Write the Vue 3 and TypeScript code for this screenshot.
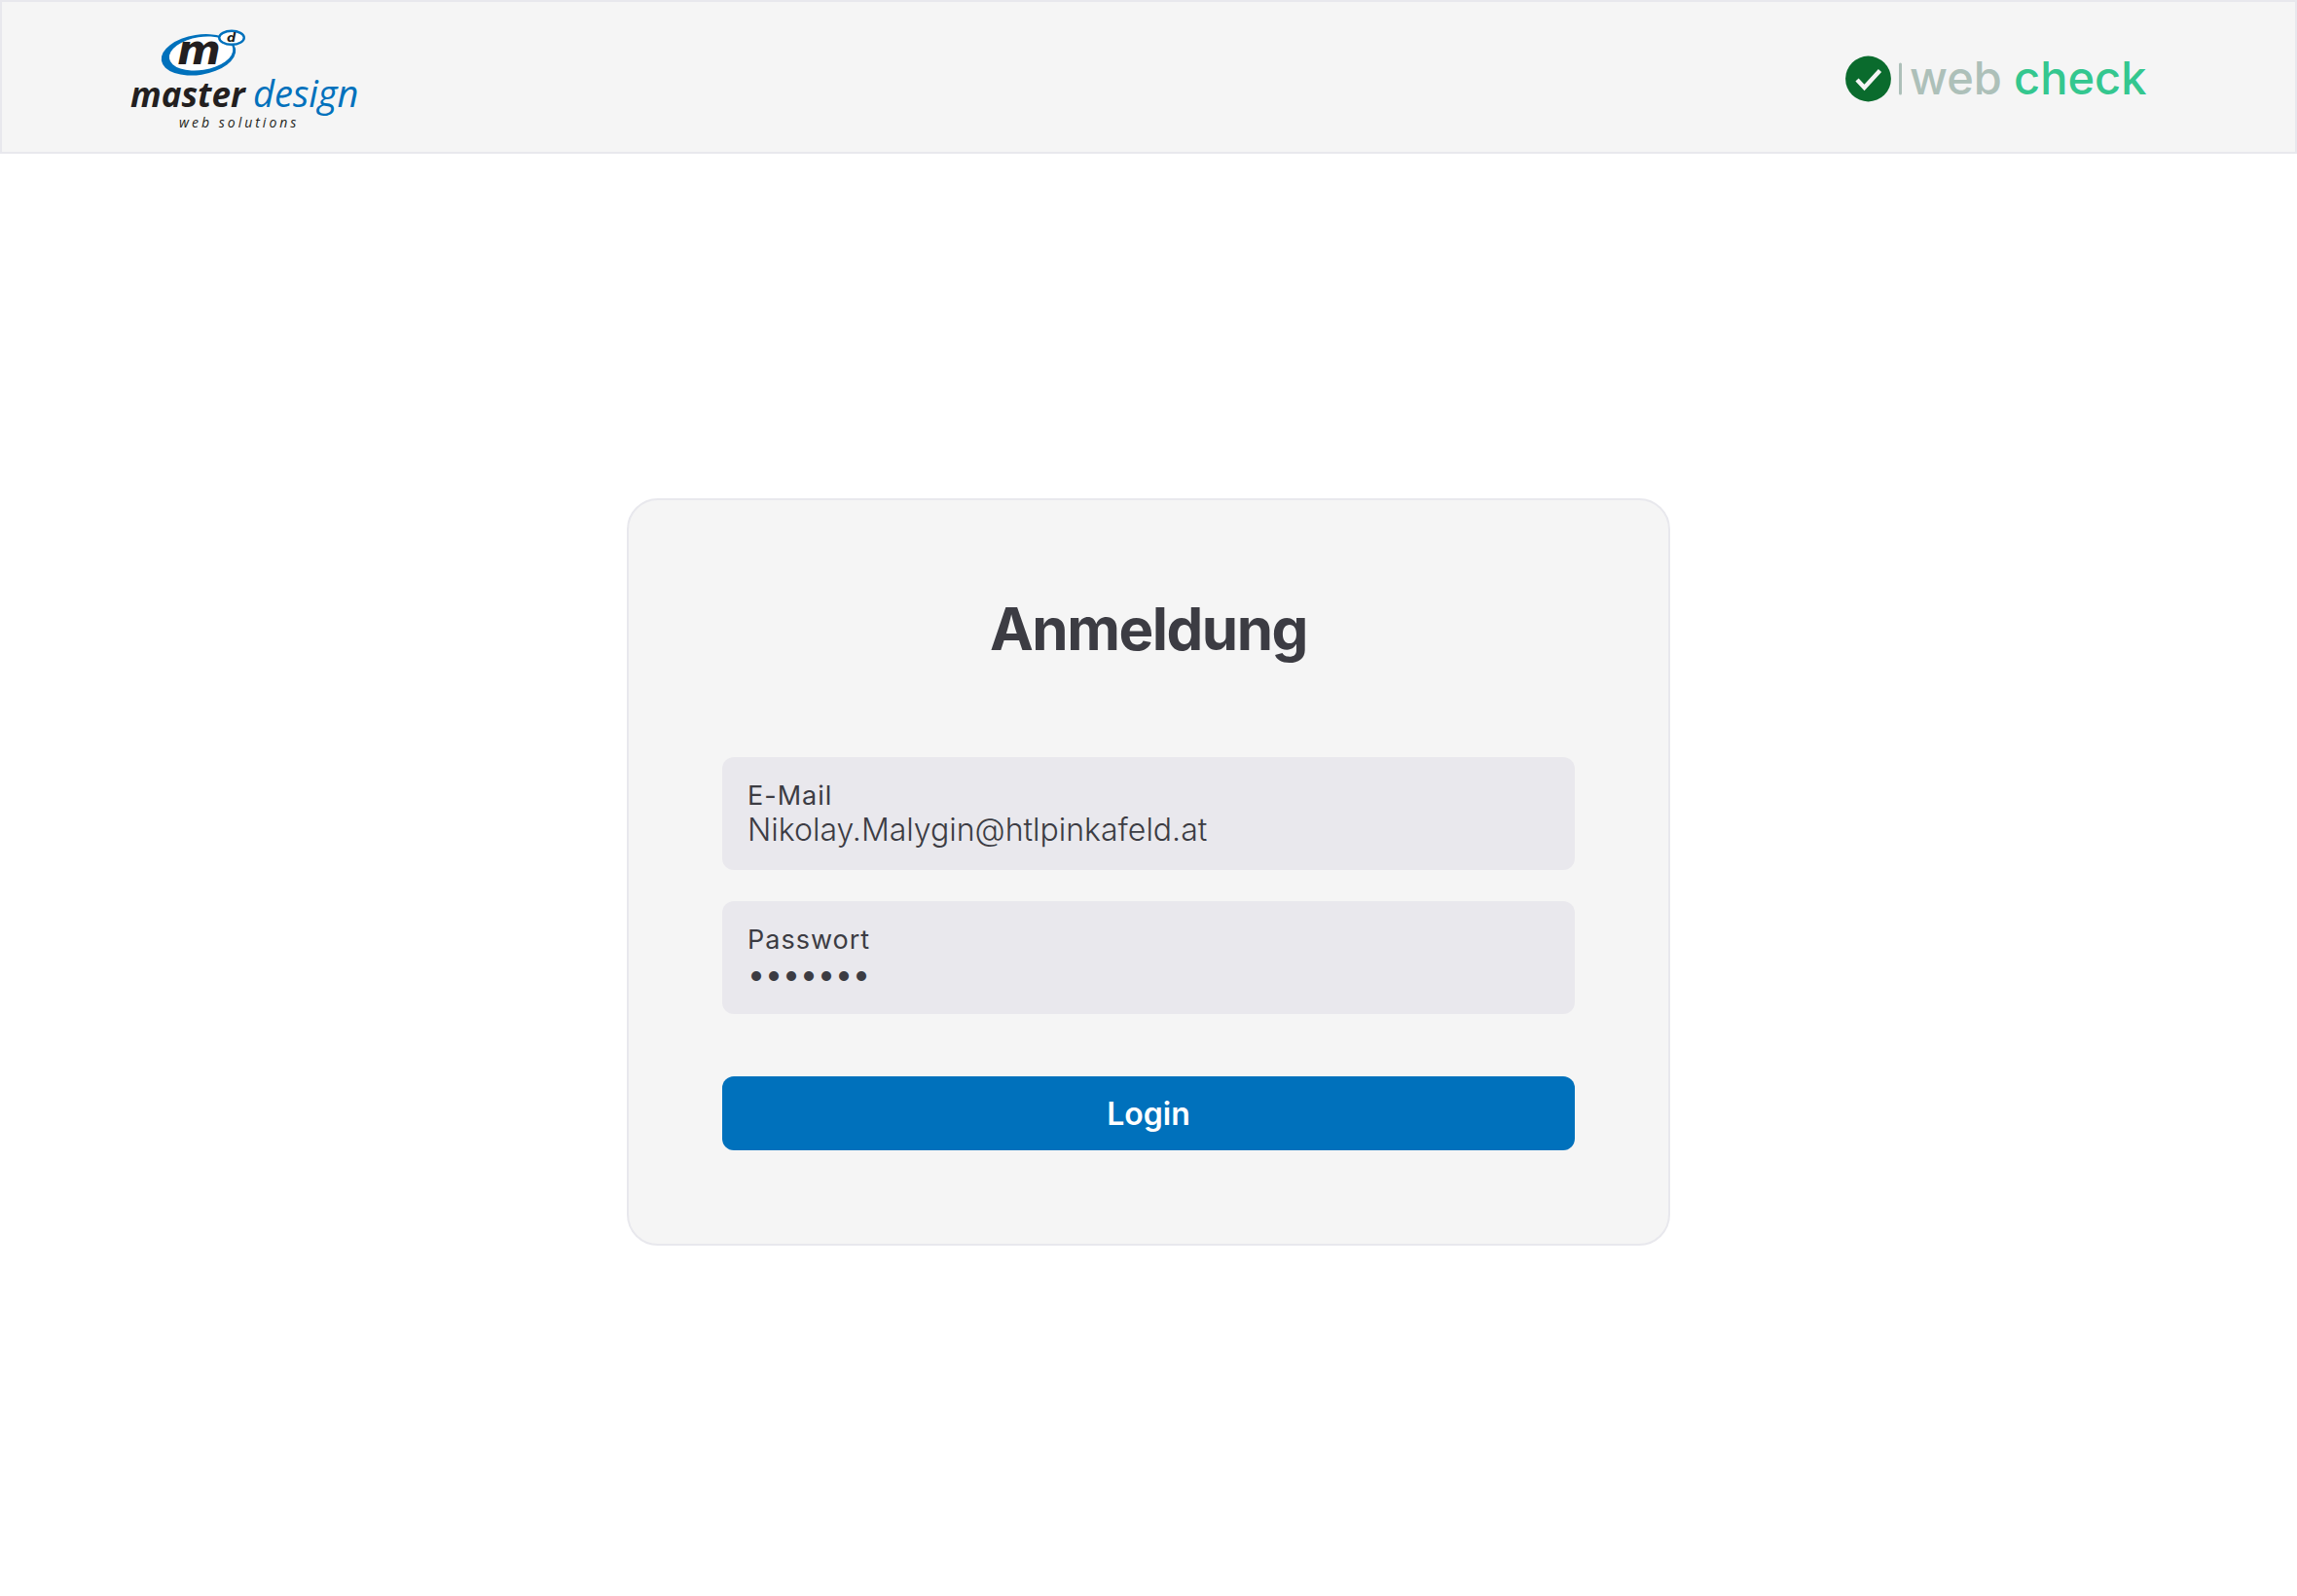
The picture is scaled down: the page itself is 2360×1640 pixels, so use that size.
<script setup lang="ts">
import { ref } from 'vue'

const email = ref<string>('Nikolay.Malygin@htlpinkafeld.at')
const password = ref<string>('passwor')
</script>

<template>
  <div class="page">
    <header class="header">
      <a class="brand" href="#" aria-label="master design web solutions">
        <svg width="244" height="110" viewBox="0 0 244 110">
          <ellipse cx="74" cy="32.3" rx="38.6" ry="20.6" transform="rotate(-9 74 32.3)" fill="#0071bc" />
          <ellipse cx="76.6" cy="31" rx="33" ry="17" transform="rotate(-9 76.6 31)" fill="#fff" />
          <ellipse cx="108" cy="14.8" rx="12.8" ry="7" fill="#fff" stroke="#0071bc" stroke-width="2.4" />
          <text class="mark" x="52" y="42">m</text>
          <text class="mark-small" x="103" y="19">d</text>
          <text class="name-bold" x="4" y="86">master</text>
          <text class="name" x="130" y="86">design</text>
          <text class="tagline" x="54" y="107">web solutions</text>
        </svg>
      </a>
      <a class="brand" href="#" aria-label="web check">
        <svg width="312" height="70" viewBox="0 -10 312 70">
          <circle cx="25.5" cy="27" r="23.4" fill="#0a6b2d" />
          <path d="M14 28 L21.5 36 L37.5 18.5" fill="none" stroke="#f5f5f5" stroke-width="4.4" />
          <rect x="57" y="10.5" width="3" height="33" rx="1.5" fill="#adc0b9" />
          <text class="word word-muted" x="68" y="43">web</text>
          <text class="word word-accent" x="175" y="43">check</text>
        </svg>
      </a>
    </header>

    <main class="main">
      <form class="card" @submit.prevent>
        <h1 class="title">Anmeldung</h1>
        <div class="fields">
          <div class="field">
            <label class="label" for="email">E-Mail</label>
            <input id="email" v-model="email" class="input" type="email" spellcheck="false" />
          </div>
          <div class="field">
            <label class="label" for="password">Passwort</label>
            <input id="password" v-model="password" class="input input-secret" type="password" />
          </div>
        </div>
        <button class="submit" type="submit">Login</button>
      </form>
    </main>
  </div>
</template>

<style>
body {
  margin: 0;
  background: #fff;
}
</style>

<style scoped>
.page {
  display: flex;
  flex-direction: column;
  min-height: 100vh;
  font-family: Inter, "Liberation Sans", sans-serif;
  color: #3c3c43;
}
.header {
  display: flex;
  align-items: center;
  justify-content: space-between;
  padding: 22px 152px 22px 128px;
  border: 2px solid #e8e8ed;
  background: #f5f5f5;
}
.brand,
.brand svg {
  display: block;
}
.mark,
.mark-small {
  font-family: "DejaVu Sans", sans-serif;
  font-style: italic;
  font-weight: 700;
  fill: #231f20;
}
.mark {
  font-size: 43px;
}
.mark-small {
  font-size: 13px;
}
.name,
.name-bold,
.tagline {
  font-family: "Open Sans", sans-serif;
  font-style: italic;
  fill: #231f20;
}
.name {
  font-size: 38px;
  font-weight: 500;
  fill: #0071bc;
}
.name-bold {
  font-size: 35px;
  font-weight: 700;
}
.tagline {
  font-size: 14px;
  letter-spacing: 3px;
}
.word {
  font-size: 47px;
  font-weight: 500;
}
.word-muted {
  fill: #adc0b9;
}
.word-accent {
  fill: #34c78f;
}
.main {
  display: flex;
  flex: 1;
  align-items: center;
  justify-content: center;
  padding-bottom: 6px;
}
.card {
  box-sizing: border-box;
  width: 100%;
  max-width: 1072px;
  padding: 96px;
  border: 2px solid #e8e8ed;
  border-radius: 32px;
  background: #f5f5f5;
}
.title {
  margin: 0 0 96px;
  font-size: 60px;
  line-height: 72px;
  font-weight: 700;
  letter-spacing: -0.025em;
  text-align: center;
}
.fields {
  display: flex;
  flex-direction: column;
  gap: 32px;
}
.field {
  display: flex;
  flex-direction: column;
  padding: 24px 26px 22px;
  border-radius: 12px;
  background: #e9e8ed;
}
.label {
  font-size: 27px;
  line-height: 32px;
  letter-spacing: 1px;
}
.input {
  width: 100%;
  height: 38px;
  padding: 0;
  border: 0;
  outline: 0;
  background: transparent;
  color: inherit;
  font-family: inherit;
  font-size: 32px;
  line-height: 38px;
  font-weight: 300;
}
.input-secret {
  font-weight: 400;
}
.submit {
  display: block;
  width: 100%;
  height: 76px;
  margin-top: 64px;
  padding: 0;
  border: 0;
  border-radius: 12px;
  background: #0071bc;
  color: #fff;
  font-family: inherit;
  font-size: 32px;
  font-weight: 600;
}
</style>
